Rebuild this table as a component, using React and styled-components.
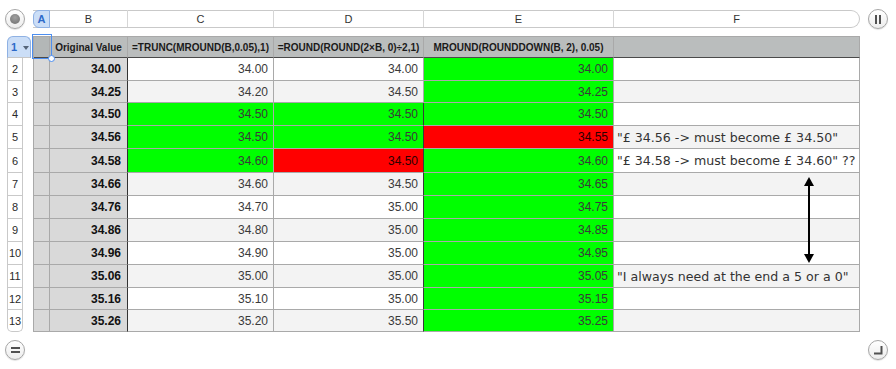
import React from 'react';
import styled, { createGlobalStyle } from 'styled-components';

const GlobalStyle = createGlobalStyle`
  html, body { margin: 0; padding: 0; background: #fff; }
  body { font-family: "Liberation Sans", Arial, sans-serif; }
`;

const COLS = [16, 78, 146, 150, 190, 246];
const ROW_H = [21, 23, 22, 23, 23, 24, 23, 23, 23, 23, 23, 22, 22];
const GREEN = '#00ff00';
const RED = '#ff0000';

const ROWS = [
  { n: 2, b: '34.00', c: '34.00', d: '34.00', e: '34.00', ec: GREEN },
  { n: 3, b: '34.25', c: '34.20', d: '34.50', e: '34.25', ec: GREEN },
  { n: 4, b: '34.50', c: '34.50', d: '34.50', e: '34.50', cc: GREEN, dc: GREEN, ec: GREEN },
  { n: 5, b: '34.56', c: '34.50', d: '34.50', e: '34.55', cc: GREEN, dc: GREEN, ec: RED, f: '"£ 34.56 -> must become £ 34.50"' },
  { n: 6, b: '34.58', c: '34.60', d: '34.50', e: '34.60', cc: GREEN, dc: RED, ec: GREEN, f: '"£ 34.58 -> must become £ 34.60" ??' },
  { n: 7, b: '34.66', c: '34.60', d: '34.50', e: '34.65', ec: GREEN },
  { n: 8, b: '34.76', c: '34.70', d: '35.00', e: '34.75', ec: GREEN },
  { n: 9, b: '34.86', c: '34.80', d: '35.00', e: '34.85', ec: GREEN },
  { n: 10, b: '34.96', c: '34.90', d: '35.00', e: '34.95', ec: GREEN },
  { n: 11, b: '35.06', c: '35.00', d: '35.00', e: '35.05', ec: GREEN, f: '"I always need at the end a 5 or a 0"' },
  { n: 12, b: '35.16', c: '35.10', d: '35.00', e: '35.15', ec: GREEN },
  { n: 13, b: '35.26', c: '35.20', d: '35.50', e: '35.25', ec: GREEN },
];

const Page = styled.div`
  width: 896px;
  height: 369px;
  overflow: hidden;
  box-sizing: border-box;
  padding-top: 9px;
  display: flex;
  flex-direction: column;
`;

const TopBar = styled.div`
  display: flex;
  align-items: center;
  gap: 8px;
  height: 20px;
  padding-left: 5px;
`;

const RoundButton = styled.div`
  width: 20px;
  height: 20px;
  box-sizing: border-box;
  border-radius: 50%;
  border: 1px solid #a6a6a6;
  background: linear-gradient(#ffffff, #ececec);
  box-shadow: 0 1px 1px rgba(0, 0, 0, 0.12);
  display: flex;
  align-items: center;
  justify-content: center;
  flex: none;
`;

const Dot = styled.div`
  width: 10px;
  height: 10px;
  border-radius: 50%;
  background: radial-gradient(circle at 50% 35%, #a0a0a0, #6e6e6e);
`;

const ColumnBar = styled.div`
  width: 827px;
  height: 18px;
  box-sizing: border-box;
  display: flex;
  border: 1px solid #c9c9c9;
  border-left: none;
  border-radius: 0 9px 9px 0;
  background: #fff;
  flex: none;
`;

const ColLetter = styled.div`
  width: ${p => p.$w}px;
  flex: ${p => (p.$grow ? '1' : 'none')};
  box-sizing: border-box;
  border-right: ${p => (p.$grow ? 'none' : '1px solid #d6d6d6')};
  display: flex;
  align-items: center;
  justify-content: center;
  font-size: 11px;
  color: #333;
  margin-top: -1px;
`;

const ColTab = styled.div`
  width: 17px;
  height: 18px;
  box-sizing: border-box;
  margin-top: -1px;
  border: 1px solid #8fb1e3;
  border-radius: 6px 0 0 6px;
  background: #cbdef7;
  display: flex;
  align-items: center;
  justify-content: center;
  font-size: 11px;
  font-weight: bold;
  color: #2e6ac9;
  flex: none;
`;

const Main = styled.div`
  display: flex;
  margin-top: 7px;
  padding-left: 7px;
`;

const RowHeaders = styled.div`
  width: 26px;
  display: flex;
  flex-direction: column;
  flex: none;
`;

const RowTab = styled.div`
  width: 24px;
  height: 22px;
  box-sizing: border-box;
  border: 1px solid #8fb1e3;
  border-bottom-color: #c6c6c6;
  border-radius: 6px 6px 0 0;
  background: #cbdef7;
  display: flex;
  align-items: center;
  padding-left: 3px;
  gap: 6px;
  font-size: 11px;
  font-weight: bold;
  color: #2e6ac9;
`;

const TabCaret = styled.span`
  width: 0;
  height: 0;
  border-left: 3px solid transparent;
  border-right: 3px solid transparent;
  border-top: 4px solid #55657a;
  margin-top: 2px;
`;

const RowLabel = styled.div`
  width: 16px;
  height: ${p => p.$h}px;
  box-sizing: border-box;
  border: 1px solid #c9c9c9;
  border-top: none;
  border-radius: ${p => (p.$last ? '0 0 5px 5px' : '0')};
  background: #fff;
  display: flex;
  align-items: center;
  justify-content: center;
  font-size: 11px;
  color: #2a2a2a;
`;

const SheetWrap = styled.div`
  position: relative;
`;

const Sheet = styled.div`
  display: grid;
  grid-template-columns: ${COLS.map(c => c + 'px').join(' ')};
  grid-template-rows: ${ROW_H.map(h => h + 'px').join(' ')};
  border-top: 1px solid #a9a9a9;
  border-left: 1px solid #a9a9a9;
`;

const BaseCell = styled.div`
  box-sizing: border-box;
  border-right: 1px solid #a9a9a9;
  border-bottom: 1px solid #a9a9a9;
  display: flex;
  align-items: center;
  white-space: nowrap;
  min-width: 0;
`;

const HeadCell = styled(BaseCell)`
  background: #babdbd;
  border-bottom-color: #4a4a4a;
  justify-content: center;
  font-size: 10px;
  font-weight: bold;
  color: #1a1a1a;
`;

const StubCell = styled(BaseCell)`
  background: ${p => (p.$head ? '#b3b7b7' : '#d9d9d9')};
  border-bottom-color: ${p => (p.$head ? '#4a4a4a' : '#a9a9a9')};
`;

const KeyCell = styled(BaseCell)`
  background: #d9d9d9;
  border-right-color: #333;
  justify-content: flex-end;
  padding-right: 6px;
  font-size: 12px;
  font-weight: bold;
  color: #111;
`;

const NumCell = styled(BaseCell)`
  background: ${p => p.$bg};
  border-right-color: ${p => (p.$darkRight ? '#3a3a3a' : '#a9a9a9')};
  justify-content: flex-end;
  padding-right: 5px;
  font-size: 12px;
  color: ${p => (p.$bg === RED ? '#2a0000' : '#3a3a3a')};
`;

const NoteCell = styled(BaseCell)`
  background: ${p => p.$bg};
  padding-left: 3px;
  font-family: "DejaVu Sans", "Liberation Sans", sans-serif;
  font-size: 12.6px;
  color: #333;
`;

const Selection = styled.div`
  position: absolute;
  left: -1px;
  top: -2px;
  width: 20px;
  height: 25px;
  box-sizing: border-box;
  border: 1px solid #4d8ff0;
  pointer-events: none;
`;

const Handle = styled.div`
  position: absolute;
  right: -4px;
  bottom: -4px;
  width: 7px;
  height: 7px;
  box-sizing: border-box;
  border-radius: 50%;
  border: 1px solid #4d8ff0;
  background: #fff;
`;

const ArrowLayer = styled.svg`
  position: absolute;
  left: 770px;
  top: 141px;
`;

const BottomBar = styled.div`
  display: flex;
  justify-content: space-between;
  align-items: center;
  margin-top: 8px;
  padding: 0 8px 0 5px;
`;

const Glyph = styled.svg`
  display: block;
`;

const zebra = n => (n % 2 === 1 ? '#f3f3f3' : '#ffffff');

export default function App() {
  return (
    <Page>
      <GlobalStyle />
      <TopBar>
        <RoundButton><Dot /></RoundButton>
        <ColumnBar>
          <ColTab>A</ColTab>
          <ColLetter $w={COLS[1]}>B</ColLetter>
          <ColLetter $w={COLS[2]}>C</ColLetter>
          <ColLetter $w={COLS[3]}>D</ColLetter>
          <ColLetter $w={COLS[4]}>E</ColLetter>
          <ColLetter $grow>F</ColLetter>
        </ColumnBar>
        <RoundButton>
          <Glyph width="8" height="9" viewBox="0 0 8 9">
            <rect x="1" y="0" width="2" height="9" fill="#505050" />
            <rect x="5" y="0" width="2" height="9" fill="#505050" />
          </Glyph>
        </RoundButton>
      </TopBar>

      <Main>
        <RowHeaders>
          <RowTab>1<TabCaret /></RowTab>
          {ROWS.map((r, i) => (
            <RowLabel key={r.n} $h={ROW_H[i + 1]} $last={i === ROWS.length - 1}>{r.n}</RowLabel>
          ))}
        </RowHeaders>

        <SheetWrap>
          <Sheet>
            <StubCell $head />
            <HeadCell>Original Value</HeadCell>
            <HeadCell>=TRUNC(MROUND(B,0.05),1)</HeadCell>
            <HeadCell>=ROUND(ROUND(2×B, 0)÷2,1)</HeadCell>
            <HeadCell>MROUND(ROUNDDOWN(B, 2), 0.05)</HeadCell>
            <HeadCell />
            {ROWS.map(r => (
              <React.Fragment key={r.n}>
                <StubCell />
                <KeyCell>{r.b}</KeyCell>
                <NumCell $bg={r.cc || zebra(r.n)}>{r.c}</NumCell>
                <NumCell $bg={r.dc || zebra(r.n)} $darkRight={r.n >= 4}>{r.d}</NumCell>
                <NumCell $bg={r.ec || zebra(r.n)}>{r.e}</NumCell>
                <NoteCell $bg={zebra(r.n)}>{r.f || ''}</NoteCell>
              </React.Fragment>
            ))}
          </Sheet>
          <Selection><Handle /></Selection>
          <ArrowLayer width="12" height="86" viewBox="0 0 12 86">
            <line x1="6" y1="7" x2="6" y2="79" stroke="#000" strokeWidth="2" />
            <polygon points="6,0 1,9 11,9" fill="#000" />
            <polygon points="6,86 1,77 11,77" fill="#000" />
          </ArrowLayer>
        </SheetWrap>
      </Main>

      <BottomBar>
        <RoundButton>
          <Glyph width="9" height="6" viewBox="0 0 9 6">
            <rect x="0" y="0" width="9" height="2" fill="#505050" />
            <rect x="0" y="4" width="9" height="2" fill="#505050" />
          </Glyph>
        </RoundButton>
        <RoundButton>
          <Glyph width="9" height="9" viewBox="0 0 9 9">
            <path d="M7.5 0 V7.5 H0" stroke="#505050" strokeWidth="2" fill="none" />
          </Glyph>
        </RoundButton>
      </BottomBar>
    </Page>
  );
}
